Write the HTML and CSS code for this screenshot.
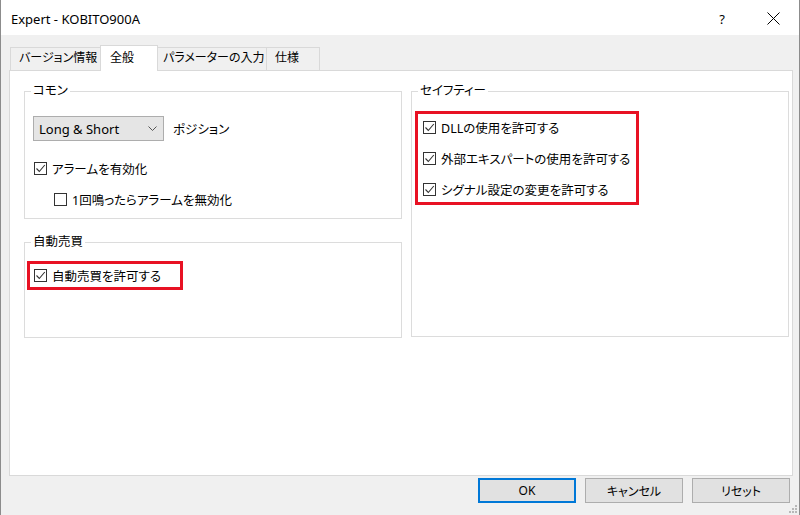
FILE: index.html
```html
<!DOCTYPE html>
<html lang="ja">
<head>
<meta charset="utf-8">
<title>Expert - KOBITO900A</title>
<link rel="stylesheet" href="styles.css">
</head>
<body>
<div class="window">
  <div class="titlebar">
    <span class="title">Expert - KOBITO900A</span>
    <span class="help">?</span>
    <svg class="close" width="13" height="13" viewBox="0 0 13 13"><path d="M0.5 0.5 L12.5 12.5 M12.5 0.5 L0.5 12.5" stroke="#000" stroke-width="1" fill="none"/></svg>
  </div>
  <div class="content">
    <div class="tabs">
      <div class="tab t1">バージョン情報</div>
      <div class="tab t2 active">全般</div>
      <div class="tab t3">パラメーターの入力</div>
      <div class="tab t4">仕様</div>
    </div>
    <div class="panel">
      <div class="col">
        <fieldset class="group common">
          <legend>コモン</legend>
          <div class="common-body">
            <div class="select-row">
              <div class="select"><span>Long &amp; Short</span><svg width="9" height="5" viewBox="0 0 9 5"><path d="M0.5 0.5 L4.5 4.5 L8.5 0.5" stroke="#555" fill="none"/></svg></div>
              <span>ポジション</span>
            </div>
            <div class="check row1"><span class="box checked"><svg width="11" height="11" viewBox="0 0 11 11"><path d="M1.5 5.5 L4.3 8.5 L9.8 2" stroke="#333" stroke-width="1.1" fill="none"/></svg></span><span>アラームを有効化</span></div>
            <div class="check row2"><span class="box"></span><span>1回鳴ったらアラームを無効化</span></div>
          </div>
        </fieldset>
        <fieldset class="group auto">
          <legend>自動売買</legend>
          <div class="auto-body">
            <div class="redbox auto-red">
              <div class="check"><span class="box checked"><svg width="11" height="11" viewBox="0 0 11 11"><path d="M1.5 5.5 L4.3 8.5 L9.8 2" stroke="#333" stroke-width="1.1" fill="none"/></svg></span><span>自動売買を許可する</span></div>
            </div>
          </div>
        </fieldset>
      </div>
      <fieldset class="group safety">
        <legend>セイフティー</legend>
        <div class="safety-body">
          <div class="redbox safety-red">
            <div class="check"><span class="box checked"><svg width="11" height="11" viewBox="0 0 11 11"><path d="M1.5 5.5 L4.3 8.5 L9.8 2" stroke="#333" stroke-width="1.1" fill="none"/></svg></span><span>DLLの使用を許可する</span></div>
            <div class="check"><span class="box checked"><svg width="11" height="11" viewBox="0 0 11 11"><path d="M1.5 5.5 L4.3 8.5 L9.8 2" stroke="#333" stroke-width="1.1" fill="none"/></svg></span><span>外部エキスパートの使用を許可する</span></div>
            <div class="check"><span class="box checked"><svg width="11" height="11" viewBox="0 0 11 11"><path d="M1.5 5.5 L4.3 8.5 L9.8 2" stroke="#333" stroke-width="1.1" fill="none"/></svg></span><span>シグナル設定の変更を許可する</span></div>
          </div>
        </div>
      </fieldset>
    </div>
    <div class="buttons">
      <button class="btn default">OK</button>
      <button class="btn">キャンセル</button>
      <button class="btn">リセット</button>
    </div>
  </div>
  <svg class="grip" width="9" height="9" viewBox="0 0 9 9">
    <rect x="6" y="0" width="2" height="2" fill="#b8b8b8"/>
    <rect x="3" y="3" width="2" height="2" fill="#b8b8b8"/>
    <rect x="6" y="3" width="2" height="2" fill="#b8b8b8"/>
    <rect x="0" y="6" width="2" height="2" fill="#b8b8b8"/>
    <rect x="3" y="6" width="2" height="2" fill="#b8b8b8"/>
    <rect x="6" y="6" width="2" height="2" fill="#b8b8b8"/>
  </svg>
</div>
</body>
</html>
```
FILE: styles.css
```css
* { box-sizing: border-box; }
html, body { margin: 0; padding: 0; }
body {
  font-family: "Noto Sans", "Noto Sans CJK JP", sans-serif;
  font-size: 12.5px;
  color: #000;
  font-feature-settings: "palt";
  background: #f0f0f0;
}
.window {
  width: 800px;
  height: 515px;
  display: flex;
  flex-direction: column;
  background: #f0f0f0;
  border-left: 1px solid #8c8c8c;
  border-right: 1px solid #8c8c8c;
  position: relative;
  overflow: hidden;
}
.titlebar {
  height: 35px;
  flex: none;
  background: #fff;
  display: flex;
  align-items: center;
  padding: 2px 19px 0 10px;
}
.title { flex: 1; font-size: 13px; }
.help { width: 8px; text-align: center; margin-right: 41px; font-size: 13px; }
.close { display: block; }

.content {
  flex: 1;
  display: flex;
  flex-direction: column;
  padding: 10px 6px 0 8px;
}
.tabs {
  display: flex;
  align-items: flex-end;
  margin-left: 1px;
  height: 25px;
}
.tab {
  height: 23px;
  border: 1px solid #d9d9d9;
  border-bottom: none;
  background: #f0f0f0;
  line-height: 20px;
  white-space: nowrap;
  font-size: 12px;
}
.t1 { width: 90px; padding-left: 8px; border-right: none; }
.t2 { width: 58px; padding-left: 9px; }
.t3 { width: 109px; padding-left: 5px; border-left: none; }
.t4 { width: 53px; padding-left: 8px; border-left: none; }
.tab.active {
  height: 26px;
  margin-bottom: -1px;
  background: #fff;
  position: relative;
  z-index: 1;
  line-height: 23px;
}
.panel {
  height: 406px;
  width: 784px;
  background: #fff;
  border: 1px solid #d9d9d9;
  padding: 12px 3px 0 14px;
  display: grid;
  grid-template-columns: 378px 378px;
  column-gap: 9px;
  align-items: start;
}
.col { display: flex; flex-direction: column; }
.group {
  margin: 0;
  padding: 0;
  min-width: 0;
  border: 1px solid #dcdcdc;
}
.group legend {
  margin-left: 6px;
  padding: 0 2px;
  line-height: 16px;
}
.common { height: 136px; }
.common-body { padding: 17px 0 0 8px; }
.select-row { display: flex; align-items: center; gap: 9px; }
.select {
  width: 131px;
  height: 25px;
  background: #e5e5e5;
  border: 1px solid #adadad;
  display: flex;
  align-items: center;
  justify-content: space-between;
  padding: 0 6px 0 5px;
  font-size: 13px;
}
.select svg { display: block; }
.check {
  display: flex;
  align-items: center;
  gap: 5px;
  height: 20px;
  white-space: nowrap;
}
.box {
  width: 13px;
  height: 13px;
  border: 1px solid #333;
  background: #fff;
  flex: none;
}
.box svg { display: block; }
.row1 { margin-top: 17px; margin-left: 1px; }
.row2 { margin-top: 11px; margin-left: 21px; }

.auto { margin-top: 15px; height: 104px; }
.auto-body { padding: 11px 0 0 2px; }
.redbox { border: 3px solid #e81123; }
.auto-red { width: 156px; padding: 1px 0 2px 4px; }

.safety { height: 254px; }
.safety-body { padding: 12px 0 0 3px; }
.safety-red {
  width: 224px;
  padding: 3px 0 3px 5px;
  display: flex;
  flex-direction: column;
  gap: 11px;
}

.buttons {
  display: flex;
  justify-content: flex-end;
  gap: 9px;
  margin-top: 2px;
  margin-right: 3px;
}
.btn {
  width: 98px;
  height: 25px;
  background: #e1e1e1;
  border: 1px solid #adadad;
  font-family: inherit;
  font-size: 12px;
  color: #000;
  padding: 0;
  font-feature-settings: "palt";
}
.btn.default {
  border-color: #0078d7;
  box-shadow: inset 0 0 0 1px #0078d7;
}
.grip { position: absolute; right: 1px; bottom: 1px; }
```
